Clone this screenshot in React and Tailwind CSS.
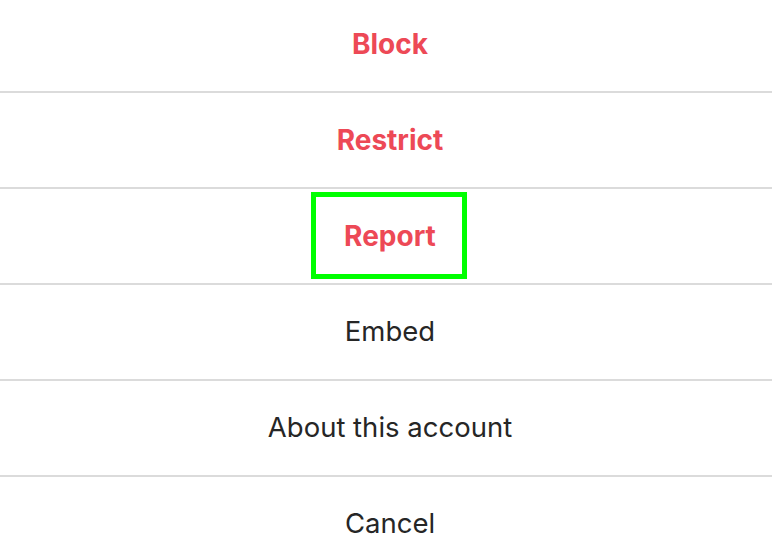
import React from 'react';

const items = [
  { label: 'Block', danger: true },
  { label: 'Restrict', danger: true },
  { label: 'Report', danger: true, highlight: true },
  { label: 'Embed' },
  { label: 'About this account' },
  { label: 'Cancel' },
];

const App = () => {
  return (
    <div className="w-[772px] h-[558px] overflow-hidden bg-white" style={{ fontFamily: 'Inter, "Liberation Sans", sans-serif' }}>
      <div className="-mt-[3px] flex flex-col">
        {items.map((item) => (
          <div
            key={item.label}
            className="relative h-[96px] shrink-0 flex items-center justify-center pl-2 border-b-2 border-[#dbdbdb]"
          >
            <span
              className={
                item.danger
                  ? 'text-[28px] font-bold text-[#ed4956]'
                  : 'text-[27.5px] font-normal text-[#262626]'
              }
            >
              {item.label}
            </span>
            {item.highlight && (
              <div className="absolute top-[3px] left-[311px] w-[156px] h-[87px] border-[5px] border-[#00ff00]" />
            )}
          </div>
        ))}
      </div>
    </div>
  );
};

export default App;
